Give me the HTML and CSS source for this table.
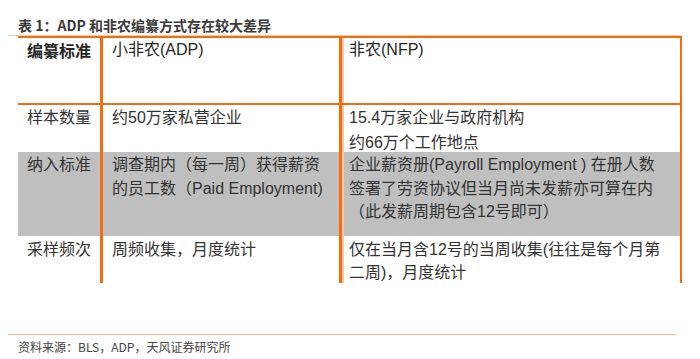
FILE: index.html
```html
<!DOCTYPE html>
<html lang="zh">
<head>
<meta charset="utf-8">
<link rel="stylesheet" href="styles.css">
</head>
<body>
<div class="page">
  <div class="title">表 1：ADP 和非农编纂方式存在较大差异</div>
  <div class="rule"></div>
  <div class="grid">
    <div class="cell c1 head-row bold">编纂标准</div>
    <div class="cell c2 head-row">小非农(ADP)</div>
    <div class="cell c3 head-row">非农(NFP)</div>

    <div class="cell c1 r1">样本数量</div>
    <div class="cell c2 r1">约50万家私营企业</div>
    <div class="cell c3 r1">15.4万家企业与政府机构<br>约66万个工作地点</div>

    <div class="cell c1 r2 gray">纳入标准</div>
    <div class="cell c2 r2 gray">调查期内（每一周）获得薪资<br>的员工数（Paid Employment)</div>
    <div class="cell c3 r2 gray">企业薪资册(Payroll Employment ) 在册人数<br>签署了劳资协议但当月尚未发薪亦可算在内<br>（此发薪周期包含12号即可）</div>

    <div class="cell c1 r3">采样频次</div>
    <div class="cell c2 r3">周频收集，月度统计</div>
    <div class="cell c3 r3">仅在当月含12号的当周收集(往往是每个月第<br>二周)，月度统计</div>
  </div>
  <div class="footer-rule"></div>
  <div class="footer">资料来源：BLS，ADP，天风证券研究所</div>
</div>
</body>
</html>
```

FILE: styles.css
```css
html, body {
  margin: 0;
  padding: 0;
  background: #ffffff;
}
.page {
  width: 700px;
  height: 359px;
  padding: 0 0 0 8px;
  box-sizing: border-box;
  font-family: "Liberation Sans", "Noto Sans CJK SC", sans-serif;
  color: #333333;
}
.title {
  padding: 15px 0 0 10px;
  height: 20px;
  font-family: "Noto Sans CJK SC", sans-serif;
  font-weight: bold;
  font-size: 14px;
  line-height: 20px;
  color: #3a3a3a;
}
.rule {
  height: 0;
  border-top: 1px solid #f5c9a3;
  width: 675px;
}
.grid {
  margin-left: 10px;
  width: 664px;
  display: grid;
  grid-template-columns: 85px 239px 340px;
  grid-template-rows: 67px 47px 84px 47px;
  border-top: 2px solid #f26d12;
  font-size: 16px;
  line-height: 24px;
}
.cell {
  box-sizing: border-box;
  padding-top: 0;
}
.c1 {
  padding-left: 9px;
  border-right: 3px solid #f26d12;
}
.c2 {
  padding-left: 9px;
  border-right: 3px solid #f26d12;
}
.c3 {
  padding-left: 7px;
  border-right: 2px solid #f26d12;
  box-shadow: inset 2px 0 0 #f9c9a3;
}
.head-row {
  border-bottom: 2px solid #f26d12;
  color: #262626;
}
.bold {
  font-family: "Noto Sans CJK SC", sans-serif;
  font-weight: bold;
}
.r1 { padding-top: 0; line-height: 25px; }
.r2 { padding-top: 1px; line-height: 23.5px; }
.r3 { padding-top: 2px; line-height: 23px; }
.gray {
  background: #bfbfbf;
}
.footer-rule {
  margin-top: 51px;
  border-top: 1px solid #f0b488;
  width: 668px;
}
.footer {
  padding: 4px 0 0 10px;
  font-family: "Noto Sans CJK SC", sans-serif;
  font-size: 12px;
  line-height: 16px;
  color: #444444;
}
```
